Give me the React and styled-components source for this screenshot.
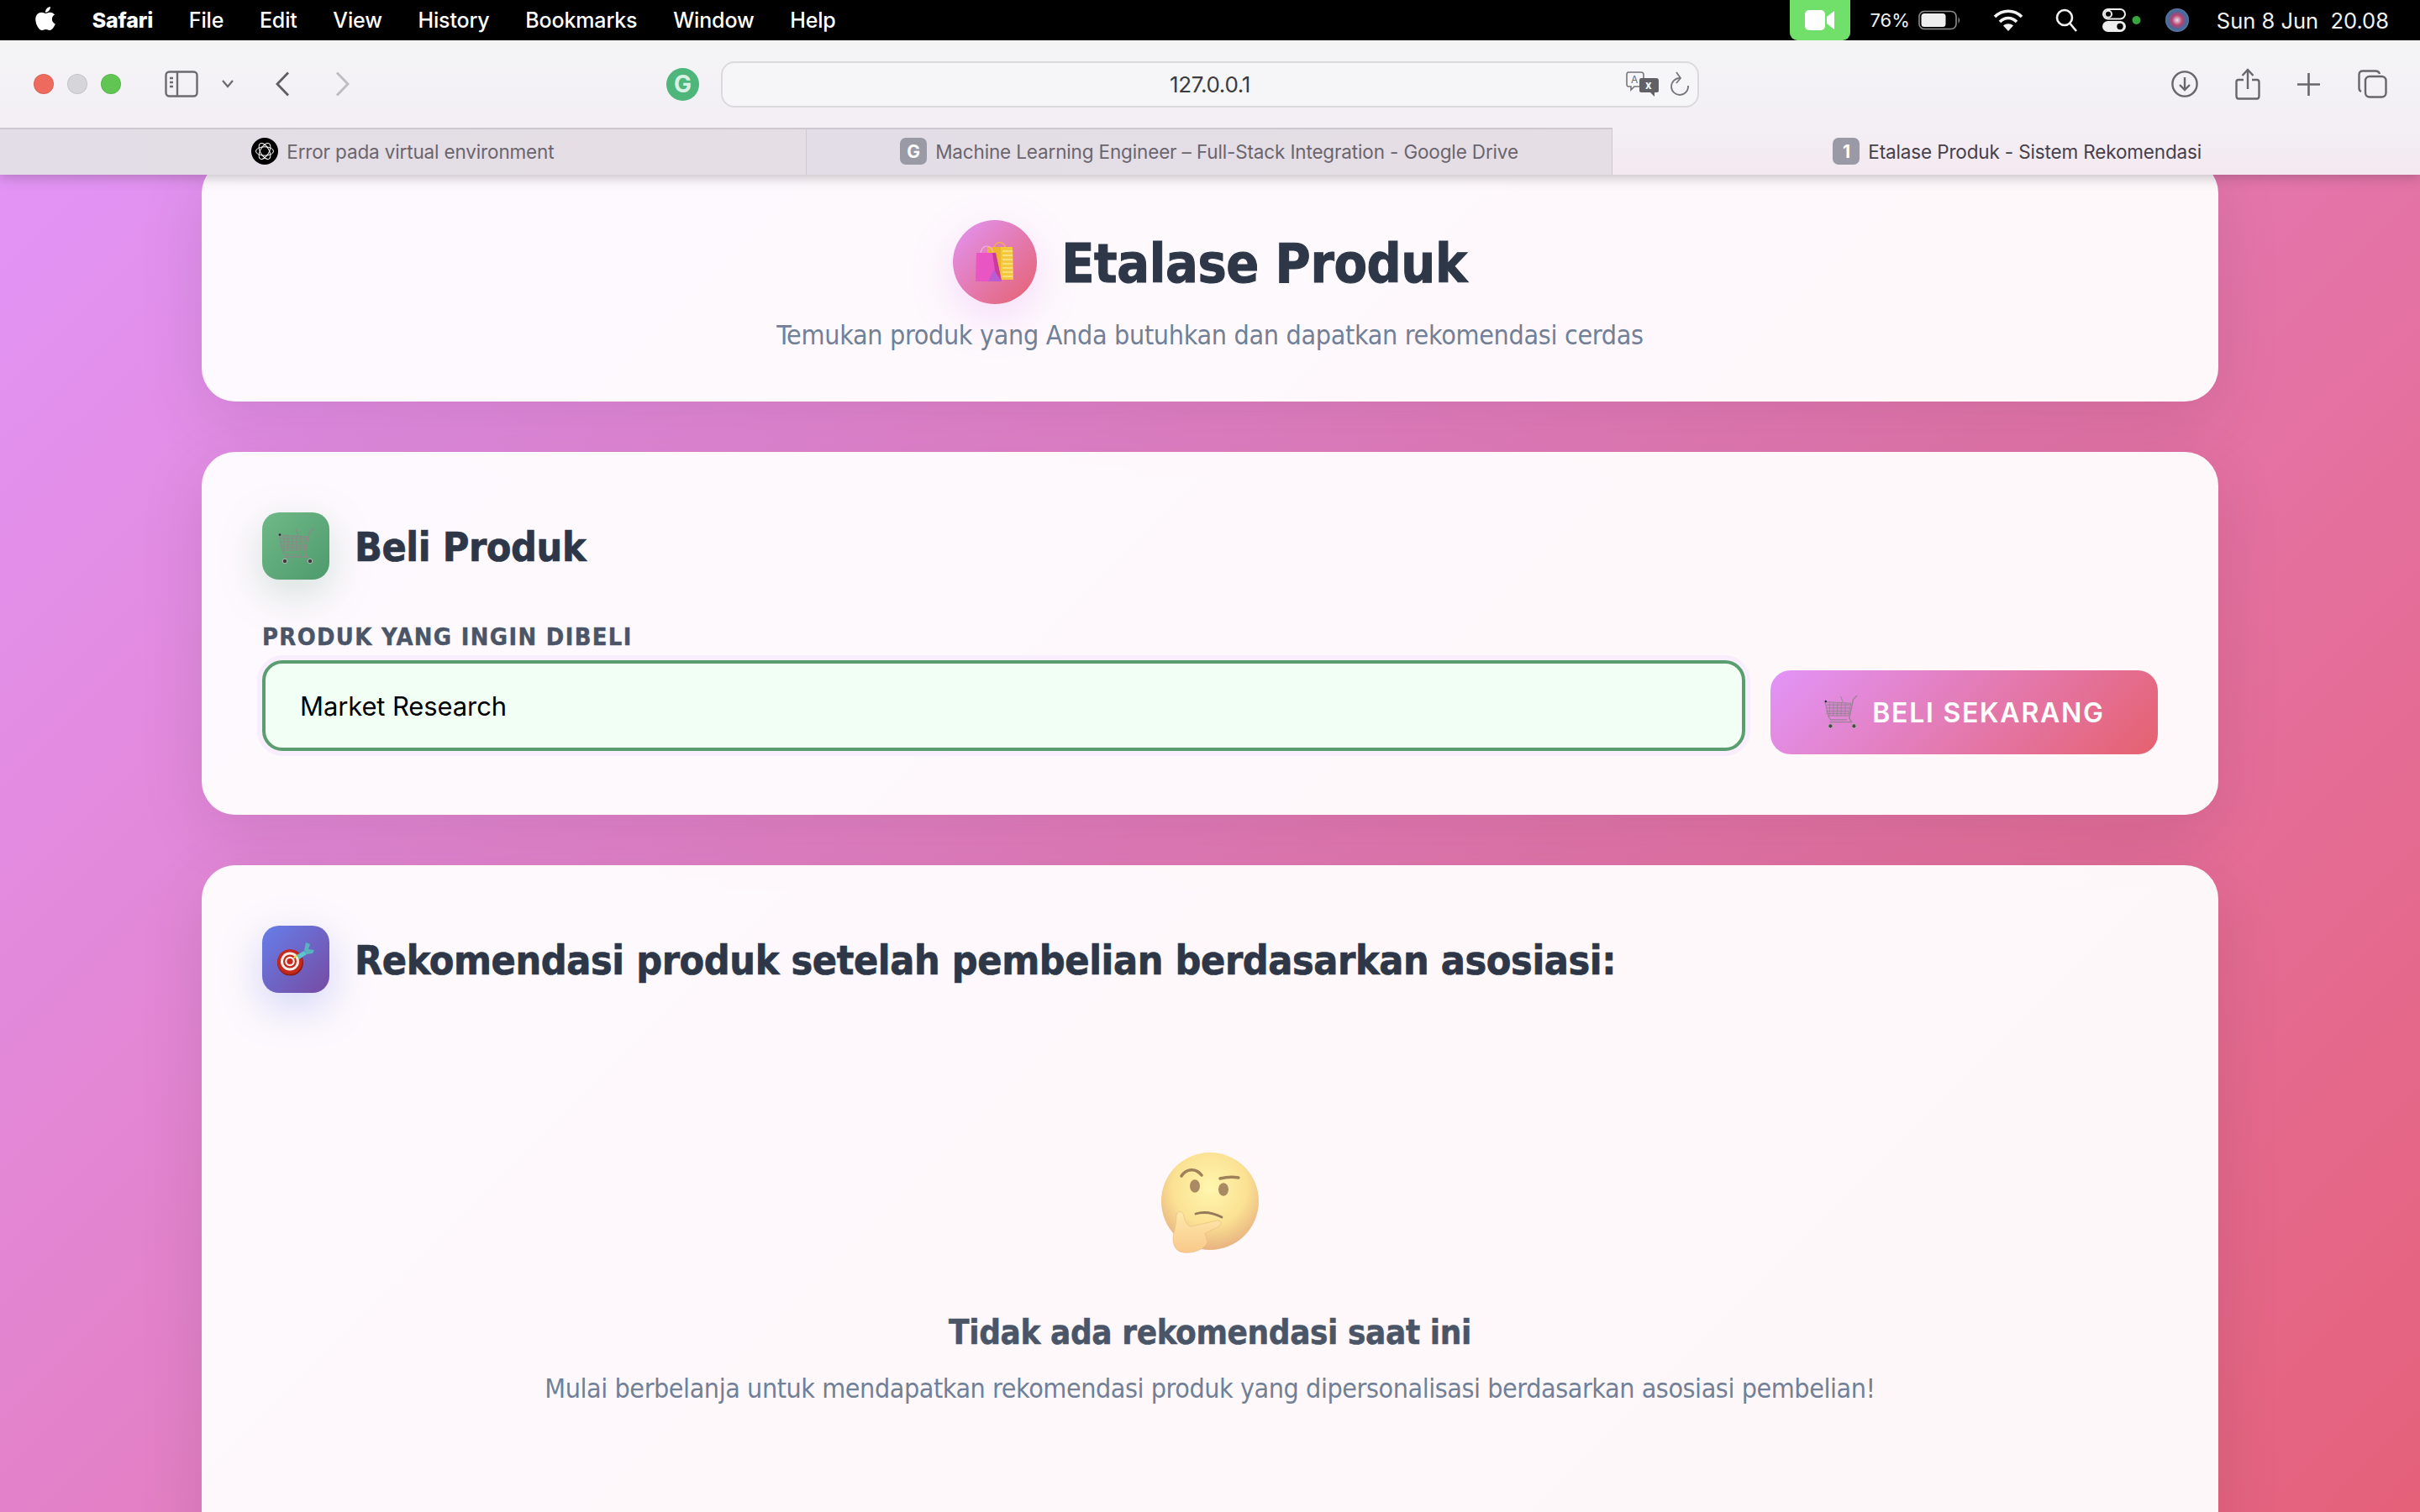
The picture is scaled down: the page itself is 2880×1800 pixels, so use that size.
import React from "react";
import styled, { createGlobalStyle } from "styled-components";
import { FaApple } from "react-icons/fa";

const Global = createGlobalStyle`
  html, body { margin: 0; padding: 0; background: #e37ab7; }
  * { box-sizing: border-box; }
`;
const SF = `Inter, "Liberation Sans", sans-serif`;
const TAHOMA = `"DejaVu Sans Condensed", "DejaVu Sans", sans-serif`;

const Page = styled.div`
  width: 2880px; height: 1800px; overflow: hidden;
  display: flex; flex-direction: column;
`;
const Chrome = styled.header`
  position: relative; z-index: 2; flex: none;
  box-shadow: 0 3px 14px rgba(60, 50, 60, 0.3);
`;
const MenuBar = styled.nav`
  height: 48px; background: #000; color: #fff;
  display: flex; align-items: center; justify-content: space-between;
  font: 500 25px ${SF}; letter-spacing: -0.15px;
`;
const MenuLeft = styled.div`
  display: flex; align-items: center; gap: 42.7px; padding-left: 38px;
`;
const MenuRight = styled.div`
  display: flex; align-items: center; height: 100%; padding-right: 37px;
`;
const Apple = styled.span`
  display: flex; font-size: 32px; margin-right: -3px; margin-top: -4px;
`;
const AppName = styled.span`font-weight: 800;`;
const FaceTime = styled.div`
  width: 72px; height: 48px; background: #70e06b; border-radius: 0 0 9px 9px;
  display: flex; align-items: center; justify-content: center;
`;
const Status = styled.span`
  font-size: ${(p) => p.$size || 25}px; font-weight: 400; color: #f2f2f2; letter-spacing: 0;
  margin-left: ${(p) => p.$left || 0}px; white-space: pre;
`;
const StatusIcon = styled.svg`
  flex: none; display: block; margin-left: ${(p) => p.$left || 0}px;
`;
const Toolbar = styled.div`
  height: 104px; background: linear-gradient(180deg, #f4f4f5, #f3eff5);
  display: flex; align-items: center; padding-left: 40px;
`;
const Traffic = styled.span`
  width: 24px; height: 24px; border-radius: 50%; flex: none;
  background: ${(p) => p.$c}; margin-right: 16px;
  border: 1px solid rgba(0,0,0,.08);
`;
const ToolIcon = styled.svg`
  flex: none; display: block; margin-left: ${(p) => p.$left || 0}px;
`;
const GrammarlyBadge = styled.div`
  width: 39px; height: 39px; border-radius: 50%; background: #4eb67b; flex: none;
  margin-left: 376px; display: flex; align-items: center; justify-content: center;
  color: #d8f1e2; font: 700 28px ${SF};
`;
const Address = styled.div`
  width: 1164px; height: 55px; margin-left: 26px; flex: none;
  border: 2px solid #dcd9dd; border-radius: 16px; background: #f6f5f7;
  display: flex; align-items: center; justify-content: flex-end; position: relative;
  padding-right: 9px; gap: 12px;
`;
const Url = styled.span`
  position: absolute; left: 0; right: 0; top: 10px; text-align: center;
  font: 400 26px/32px ${SF}; letter-spacing: -0.3px; color: #3c3b40;
`;
const Tabs = styled.div`display: flex; height: 56px;`;
const Tab = styled.div`
  flex: 1; display: flex; align-items: center; justify-content: center; gap: 10px;
  font: 400 22.5px ${SF}; letter-spacing: -0.15px;
  color: ${(p) => (p.$active ? "#45404a" : "#6a656d")};
  background: ${(p) => (p.$active ? "linear-gradient(180deg,#f3eff5,#f4e8f0)" : "linear-gradient(90deg,#e3dde7,#e5dee4)")};
  border-right: ${(p) => (p.$active ? "0" : "1px solid #cfc9d0")};
  box-shadow: ${(p) => (p.$active ? "none" : "inset 0 2px 0 #cdc8cf")};
  padding-left: ${(p) => (p.$active ? 2 : 0)}px;
`;
const Favicon = styled.span`
  width: 32px; height: 32px; border-radius: ${(p) => (p.$round ? "50%" : "7px")};
  background: ${(p) => (p.$round ? "#000" : "#9a9aa6")}; flex: none;
  display: flex; align-items: center; justify-content: center;
  color: #fff; font: 700 21px ${SF};
`;
const Main = styled.main`
  flex: 1; min-height: 0; padding: 0 240px;
  background: linear-gradient(135deg, #e294f6 0%, #e5617a 100%);
  display: flex; flex-direction: column; gap: 60px;
`;
const Card = styled.section`
  flex: none; background: rgba(255, 255, 255, 0.95); border-radius: 40px;
  padding: 72px; box-shadow: 0 20px 80px rgba(0, 0, 0, 0.1);
`;
const HeroCard = styled(Card)`
  margin-top: -18px; padding-bottom: 51px; text-align: center;
`;
const HeroRow = styled.div`
  display: flex; align-items: center; justify-content: center; gap: 29px;
`;
const HeroIcon = styled.div`
  width: 100px; height: 100px; border-radius: 50%;
  background: linear-gradient(135deg, #e294f5, #e5616f);
  box-shadow: 0 16px 50px rgba(226, 148, 245, 0.3);
  display: flex; align-items: center; justify-content: center;
`;
const HeroTitle = styled.h1`
  margin: 0; padding-top: 4px; font: 700 64px/96px ${TAHOMA}; letter-spacing: -0.4px; color: #2d3748;
  -webkit-text-stroke: 1px #2d3748;
`;
const HeroSub = styled.p`
  margin: 9px 0 0; font: 400 32px/56px ${TAHOMA}; letter-spacing: -0.33px; color: #718096;
`;
const SectionHead = styled.div`display: flex; align-items: center; gap: 30px;`;
const SectionIcon = styled.div`
  width: 80px; height: 80px; border-radius: 20px; flex: none;
  background: ${(p) => p.$bg};
  box-shadow: 0 16px 50px ${(p) => p.$glow};
  display: flex; align-items: center; justify-content: center;
`;
const SectionTitle = styled.h2`
  margin: 0; padding-top: 2px; font: 700 48px/78px ${TAHOMA}; letter-spacing: -0.42px; color: #2d3748;
  -webkit-text-stroke: 0.7px #2d3748;
`;
const FormRow = styled.div`
  display: flex; align-items: flex-end; gap: 30px; margin-top: 51px;
`;
const Field = styled.div`flex: 1; padding-bottom: 4px;`;
const Label = styled.label`
  display: block; font: 700 28.8px/34px ${TAHOMA}; letter-spacing: 1.35px;
  color: #4a5568; text-transform: uppercase; margin-bottom: 11px;
  -webkit-text-stroke: 0.4px #4a5568;
`;
const Input = styled.input`
  display: block; width: 100%; height: 108px; padding: 0 41px;
  border: 4px solid #5a9e6f; border-radius: 24px; background: #f2fff5;
  box-shadow: 0 0 0 6px #f9eefd; outline: none;
  font: 400 31px ${SF}; letter-spacing: -0.12px; color: #000;
`;
const BuyButton = styled.button`
  width: 461px; height: 100px; border: 0; border-radius: 24px;
  background: linear-gradient(135deg, #e294f8, #e5616f);
  display: flex; align-items: center; justify-content: center; gap: 16px;
  color: #fff; font: 600 32px ${SF}; letter-spacing: 1.75px; text-transform: uppercase;
`;
const Empty = styled.div`
  margin: 188px 0 200px; display: flex; flex-direction: column; align-items: center;
`;
const EmptyTitle = styled.h3`
  margin: 69px 0 0; font: 700 40px/50px ${TAHOMA}; letter-spacing: -0.4px; color: #4a5568;
  -webkit-text-stroke: 0.5px #4a5568;
`;
const EmptyText = styled.p`
  margin: 14px 0 0; font: 400 32px/56px ${TAHOMA}; letter-spacing: -0.45px; color: #718096;
`;

const Bags = () => (
  <svg width="46" height="48" viewBox="0 0 46 48">
    <path d="M22 8 C23 -2 34 -2 36 8" fill="none" stroke="#f0b04a" strokeWidth="1.4" />
    <path d="M14 6 H44 L45 45 H14Z" fill="#eeb52f" />
    <path d="M30 6 H44 L45 45 H30Z" fill="#f3c83e" />
    {[10, 15, 20, 25, 30, 35, 40].map((y) => <rect key={y} x="32" y={y} width="12" height="2" fill="#f7e07a" />)}
    <path d="M6 14 C7 2 20 2 21 14" fill="none" stroke="#f2b6d6" strokeWidth="1.2" />
    <path d="M1 13 H24 L31 47 H0Z" fill="#ea55c4" />
    <path d="M20 13 H24 L31 47 L24 40Z" fill="#c83a9b" />
    <path d="M22 33 L31 47 H15Z" fill="#b85cd0" />
  </svg>
);
const Cart = ({ wire = "#8a8a86", wheel = "#3d3d3a", w = 45, h = 45 }) => (
  <svg width={w} height={h} viewBox="0 0 45 45" fill="none" stroke={wire} strokeWidth="1">
    <path d="M2 9 L35 11 L32 27 L6 27Z" fill={wire} fillOpacity=".2" />
    {[13, 17, 21, 24].map((y) => <path key={y} d={`M3.5 ${y} H33.5`} />)}
    {[8, 13, 18, 23, 28].map((x) => <path key={x} d={`M${x} 10 L${x - 0.5} 27`} />)}
    <path d="M43 1 L38 6 L33 30 L36 35 H8" strokeWidth="1.5" />
    <path d="M22 2 L25 10" />
    <path d="M6 27 L9 32 H30" strokeWidth="1.2" />
    <circle cx="3" cy="8.5" r="1.3" fill="#23233a" stroke="none" />
    <circle cx="9" cy="40" r="2.8" fill={wheel} stroke="#bbb" />
    <circle cx="39" cy="40" r="2.8" fill={wheel} stroke="#bbb" />
  </svg>
);
const Dart = () => (
  <svg width="46" height="40" viewBox="0 0 46 40">
    <circle cx="16.5" cy="24" r="15.5" fill="#8e1a12" />
    <circle cx="16" cy="23" r="14.8" fill="#c5281c" />
    <circle cx="16" cy="22.5" r="11" fill="#f5efe8" />
    <circle cx="16" cy="22.5" r="8" fill="#c5281c" />
    <circle cx="16" cy="22.5" r="5.8" fill="#f5efe8" />
    <circle cx="16" cy="22.5" r="3.6" fill="#c5281c" />
    <path d="M20 19 L25 15" stroke="#e8d24a" strokeWidth="2.2" />
    <path d="M24 15 L33 10 L36 14 L27 20Z" fill="#5ec3cc" />
    <path d="M33 9 L35 0 L40 2 L38 8 L45 9 L43 13 L36 14Z" fill="#58b3be" />
  </svg>
);
const Thinking = () => (
  <svg width="120" height="122" viewBox="0 0 120 122">
    <defs>
      <radialGradient id="tf" cx="50%" cy="36%" r="62%">
        <stop offset="0" stopColor="#fff7ae" />
        <stop offset=".62" stopColor="#fbe193" />
        <stop offset="1" stopColor="#e9b681" />
      </radialGradient>
      <linearGradient id="th" x1="0" y1="0" x2="0" y2="1">
        <stop offset="0" stopColor="#ffe9ac" />
        <stop offset="1" stopColor="#f8c98a" />
      </linearGradient>
    </defs>
    <circle cx="60" cy="60" r="58" fill="url(#tf)" />
    <path d="M26 30 C32 21 43 20 50 29" fill="none" stroke="#9f8058" strokeWidth="3.6" strokeLinecap="round" />
    <path d="M72 33 C80 31 88 31 94 32" fill="none" stroke="#9f8058" strokeWidth="3.4" strokeLinecap="round" />
    <ellipse cx="42" cy="42" rx="6" ry="7.8" fill="#a98a62" />
    <ellipse cx="76" cy="46" rx="6" ry="7.8" fill="#a98a62" />
    <path d="M43 75 C53 72 64 74 74 79" fill="none" stroke="#94795a" strokeWidth="2.8" strokeLinecap="round" />
    <path d="M20 76 C23 70 28 72 29 78 C30 84 33 90 38 90 L68 83 C74 82 75 88 69 91 L54 98 L57 108 C55 118 36 124 24 120 C16 116 15 106 17 97 C19 90 20 82 20 76Z" fill="url(#th)" stroke="#e8b97e" strokeWidth=".6" />
  </svg>
);

const Sidebar = () => (
  <ToolIcon $left={0} width="40" height="32" viewBox="0 0 40 32" fill="none" stroke="#6b6a6f" strokeWidth="2.4">
    <rect x="1.5" y="1.5" width="37" height="29" rx="4" />
    <path d="M15 2 V30" />
    <path d="M6 9 H10 M6 14 H10 M6 19 H10" />
  </ToolIcon>
);
const OpenAIMark = () => (
  <svg width="24" height="24" viewBox="0 0 24 24" fill="none" stroke="#fff" strokeWidth="1">
    {[0, 60, 120].map((a) => <ellipse key={a} cx="12" cy="12" rx="10.5" ry="5.2" transform={`rotate(${a} 12 12)`} />)}
  </svg>
);

export default function App() {
  return (
    <Page>
      <Global />
      <Chrome>
        <MenuBar>
          <MenuLeft>
            <Apple><FaApple /></Apple>
            <AppName>Safari</AppName>
            <span>File</span><span>Edit</span><span>View</span><span>History</span>
            <span>Bookmarks</span><span>Window</span><span>Help</span>
          </MenuLeft>
          <MenuRight>
            <FaceTime>
              <svg width="36" height="26" viewBox="0 0 36 26" fill="#fff">
                <rect x="0" y="1" width="24" height="24" rx="5" />
                <path d="M26 9 L35 2 V24 L26 17Z" />
              </svg>
            </FaceTime>
            <Status $left={23} $size={22}>76%</Status>
            <StatusIcon $left={10} width="50" height="24" viewBox="0 0 50 24">
              <rect x="1" y="1.5" width="44" height="21" rx="6" fill="none" stroke="#8d8d8d" strokeWidth="1.6" />
              <rect x="3.5" y="4" width="29" height="16" rx="3.5" fill="#eee" />
              <path d="M47.5 8.5 C49.5 9.5 49.5 14.5 47.5 15.5Z" fill="#8d8d8d" />
            </StatusIcon>
            <StatusIcon $left={39} width="36" height="28" viewBox="0 0 36 28" fill="none" stroke="#f2f2f2" strokeWidth="3.6">
              <path d="M2 10 C11 1 25 1 34 10" />
              <path d="M8 16 C14 10 22 10 28 16" />
              <path d="M18 27 L12 20.5 C15.5 17.5 20.5 17.5 24 20.5Z" fill="#f2f2f2" stroke="none" />
            </StatusIcon>
            <StatusIcon $left={38} width="26" height="28" viewBox="0 0 26 28" fill="none" stroke="#f2f2f2" strokeWidth="2.6">
              <circle cx="11" cy="11" r="9" />
              <path d="M17.5 18 L25 27" />
            </StatusIcon>
            <StatusIcon $left={30} width="48" height="28" viewBox="0 0 48 28">
              <rect x="1" y="1" width="26" height="11.5" rx="5.7" fill="none" stroke="#eee" strokeWidth="2" />
              <circle cx="7" cy="6.7" r="4" fill="none" stroke="#eee" strokeWidth="2" />
              <rect x="0" y="15" width="28" height="13" rx="6.5" fill="#eee" />
              <circle cx="21" cy="21.5" r="3.7" fill="#000" />
              <circle cx="40.5" cy="14" r="5" fill="#3aa63f" />
            </StatusIcon>
            <StatusIcon $left={27} width="28" height="30" viewBox="0 0 28 30">
              <defs>
                <radialGradient id="siri" cx="50%" cy="50%" r="55%">
                  <stop offset="0" stopColor="#e8e4f0" />
                  <stop offset=".4" stopColor="#b8416e" />
                  <stop offset=".75" stopColor="#3b6ea0" />
                  <stop offset="1" stopColor="#7b7ba0" />
                </radialGradient>
              </defs>
              <circle cx="14" cy="15" r="14" fill="url(#siri)" />
            </StatusIcon>
            <Status $left={33} $size={25.5}>Sun 8 Jun  20.08</Status>
          </MenuRight>
        </MenuBar>
        <Toolbar>
          <Traffic $c="#ee6a5f" />
          <Traffic $c="#d6d5d9" />
          <Traffic $c="#61c554" />
          <ToolIcon $left={36} width="0" height="0" />
          <Sidebar />
          <ToolIcon $left={27} width="16" height="12" viewBox="0 0 16 12" fill="none" stroke="#6b6a6f" strokeWidth="2.2">
            <path d="M2 2 L8 9 L14 2" />
          </ToolIcon>
          <ToolIcon $left={48} width="18" height="30" viewBox="0 0 18 30" fill="none" stroke="#5f5e63" strokeWidth="2.8">
            <path d="M16 1.5 L3 15 L16 28.5" />
          </ToolIcon>
          <ToolIcon $left={54} width="18" height="30" viewBox="0 0 18 30" fill="none" stroke="#bdbcc0" strokeWidth="2.8">
            <path d="M2 1.5 L15 15 L2 28.5" />
          </ToolIcon>
          <GrammarlyBadge>G</GrammarlyBadge>
          <Address>
            <Url>127.0.0.1</Url>
            <svg width="40" height="30" viewBox="0 0 40 30">
              <path d="M3 1 H18 Q21 1 21 4 V15 Q21 18 18 18 H10 L6 22 V18 H3 Q1 18 1 15 V4 Q1 1 3 1Z" fill="#f6f5f7" stroke="#77767b" strokeWidth="1.6" />
              <text x="6" y="14" fontSize="12" fontFamily="Inter" fill="#6b6a6f">A</text>
              <path d="M18 8 H36 Q39 8 39 11 V23 Q39 25 36 25 H34 V30 L29 25 H18 Q16 25 16 23 V11 Q16 8 18 8Z" fill="#616065" />
              <text x="23" y="21" fontSize="13" fontWeight="700" fontFamily="Inter" fill="#fff">x</text>
            </svg>
            <svg width="24" height="32" viewBox="0 0 24 32" fill="none" stroke="#77767b" strokeWidth="1.8">
              <path d="M12 9 A10 10 0 1 0 22 18" />
              <path d="M8 2 L13 9 L8 15" />
            </svg>
          </Address>
          <ToolIcon $left={562} width="32" height="34" viewBox="0 0 32 34" fill="none" stroke="#67666b" strokeWidth="2.4">
            <circle cx="16" cy="17" r="14.6" />
            <path d="M16 9 V24 M10 18 L16 24 L22 18" />
          </ToolIcon>
          <ToolIcon $left={44} width="30" height="38" viewBox="0 0 30 38" fill="none" stroke="#67666b" strokeWidth="2.4">
            <path d="M10 14 H4 Q1.5 14 1.5 17 V33 Q1.5 36.5 4 36.5 H26 Q28.5 36.5 28.5 33 V17 Q28.5 14 26 14 H20" />
            <path d="M15 25 V2 M8.5 9 L15 2 L21.5 9" />
          </ToolIcon>
          <ToolIcon $left={44} width="27" height="27" viewBox="0 0 27 27" fill="none" stroke="#67666b" strokeWidth="2.6">
            <path d="M13.5 0 V27 M0 13.5 H27" />
          </ToolIcon>
          <ToolIcon $left={45} width="35" height="34" viewBox="0 0 35 34" fill="none" stroke="#67666b" strokeWidth="2.4">
            <path d="M4 26 Q1.5 25 1.5 22 V6 Q1.5 1.5 6 1.5 H21 Q25 1.5 26 5" />
            <rect x="9" y="8" width="24.5" height="24.5" rx="5" />
          </ToolIcon>
        </Toolbar>
        <Tabs>
          <Tab><Favicon $round><OpenAIMark /></Favicon>Error pada virtual environment</Tab>
          <Tab><Favicon>G</Favicon>Machine Learning Engineer – Full-Stack Integration - Google Drive</Tab>
          <Tab $active><Favicon>1</Favicon>Etalase Produk - Sistem Rekomendasi</Tab>
        </Tabs>
      </Chrome>
      <Main>
        <HeroCard>
          <HeroRow>
            <HeroIcon><Bags /></HeroIcon>
            <HeroTitle>Etalase Produk</HeroTitle>
          </HeroRow>
          <HeroSub>Temukan produk yang Anda butuhkan dan dapatkan rekomendasi cerdas</HeroSub>
        </HeroCard>
        <Card>
          <SectionHead>
            <SectionIcon $bg="linear-gradient(135deg,#6fb988,#4f9a6c)" $glow="rgba(80,150,110,.25)"><Cart /></SectionIcon>
            <SectionTitle>Beli Produk</SectionTitle>
          </SectionHead>
          <FormRow>
            <Field>
              <Label>Produk yang ingin dibeli</Label>
              <Input readOnly value="Market Research" />
            </Field>
            <BuyButton>
              <Cart wire="#9b8296" wheel="#4a4a48" w={42} h={42} />
              Beli Sekarang
            </BuyButton>
          </FormRow>
        </Card>
        <Card>
          <SectionHead>
            <SectionIcon $bg="linear-gradient(135deg,#667eea,#764ba2)" $glow="rgba(102,126,234,.3)"><Dart /></SectionIcon>
            <SectionTitle>Rekomendasi produk setelah pembelian berdasarkan asosiasi:</SectionTitle>
          </SectionHead>
          <Empty>
            <Thinking />
            <EmptyTitle>Tidak ada rekomendasi saat ini</EmptyTitle>
            <EmptyText>Mulai berbelanja untuk mendapatkan rekomendasi produk yang dipersonalisasi berdasarkan asosiasi pembelian!</EmptyText>
          </Empty>
        </Card>
      </Main>
    </Page>
  );
}
